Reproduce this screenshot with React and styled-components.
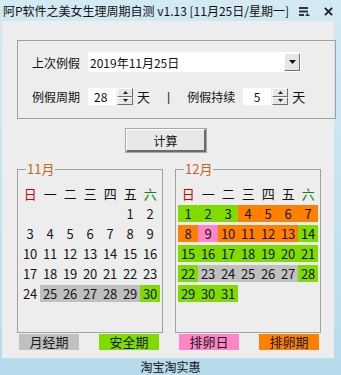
import React from "react";
import styled, { createGlobalStyle } from "styled-components";

const GlobalStyle = createGlobalStyle`
  html, body { margin: 0; padding: 0; }
  body {
    font-family: "Noto Sans CJK SC", "Noto Sans", sans-serif;
    color: #111;
  }
`;

const GRAY = "#c0c0c0";
const GREEN = "#80dc00";
const PINK = "#ff85c8";
const ORANGE = "#ff8000";

// month data: offset = weekday of day 1 (0 = sunday)
const november = {
  title: "11月",
  offset: 5,
  days: 30,
  colors: { 25: GRAY, 26: GRAY, 27: GRAY, 28: GRAY, 29: GRAY, 30: GREEN },
};

const decColors = {};
for (let d = 1; d <= 31; d++) {
  if (d <= 3) decColors[d] = GREEN;
  else if (d <= 8) decColors[d] = ORANGE;
  else if (d === 9) decColors[d] = PINK;
  else if (d <= 13) decColors[d] = ORANGE;
  else if (d <= 22) decColors[d] = GREEN;
  else if (d <= 27) decColors[d] = GRAY;
  else decColors[d] = GREEN;
}
const december = { title: "12月", offset: 0, days: 31, colors: decColors };

const weekdays = [
  { t: "日", c: "#d40000" },
  { t: "一", c: "#111" },
  { t: "二", c: "#111" },
  { t: "三", c: "#111" },
  { t: "四", c: "#111" },
  { t: "五", c: "#111" },
  { t: "六", c: "#108010" },
];

const legends = [
  { t: "月经期", c: GRAY },
  { t: "安全期", c: GREEN },
  { t: "排卵日", c: PINK },
  { t: "排卵期", c: ORANGE },
];

function Spinner() {
  return (
    <SpinBox>
      <SpinBtn>
        <svg width="5" height="3" viewBox="0 0 5 3">
          <path d="M2.5 0 L5 3 L0 3 Z" fill="#222" />
        </svg>
      </SpinBtn>
      <SpinBtn>
        <svg width="5" height="3" viewBox="0 0 5 3">
          <path d="M0 0 L5 0 L2.5 3 Z" fill="#222" />
        </svg>
      </SpinBtn>
    </SpinBox>
  );
}

function Month({ month }) {
  const cells = [];
  for (let i = 0; i < month.offset; i++) cells.push(<Cell key={"e" + i} />);
  for (let d = 1; d <= month.days; d++) {
    cells.push(
      <Cell key={d} $bg={month.colors[d]}>
        {d}
      </Cell>
    );
  }
  return (
    <CalGroup>
      <CalLegend>{month.title}</CalLegend>
      <CalGrid>
        {weekdays.map((w) => (
          <Cell key={w.t} $color={w.c}>
            {w.t}
          </Cell>
        ))}
        {cells}
      </CalGrid>
    </CalGroup>
  );
}

export default function App() {
  return (
    <>
      <GlobalStyle />
      <Window>
        <TitleBar>
          <TitleText>阿P软件之美女生理周期自测 v1.13 [11月25日/星期一]</TitleText>
          <TitleIcons>
            <svg width="11" height="9" viewBox="0 0 11 9">
              <rect x="0" y="0" width="9" height="2" fill="#333" />
              <rect x="0" y="3.5" width="9" height="2" fill="#333" />
              <rect x="0" y="7" width="5" height="2" fill="#333" />
              <path d="M6 9 L8.5 6 L11 9 Z" fill="#333" />
            </svg>
            <svg width="9" height="9" viewBox="0 0 10 10">
              <path d="M1 1 L9 9 M9 1 L1 9" stroke="#222" strokeWidth="2.2" />
            </svg>
          </TitleIcons>
        </TitleBar>

        <Body>
          <SettingsGroup>
            <Row>
              <Label>上次例假</Label>
              <DateBox>
                <span>2019年11月25日</span>
                <DropBtn>
                  <svg width="7" height="4" viewBox="0 0 7 4">
                    <path d="M0 0 L7 0 L3.5 4 Z" fill="#111" />
                  </svg>
                </DropBtn>
              </DateBox>
            </Row>
            <Row>
              <Label>例假周期</Label>
              <NumBox $w={28}>28</NumBox>
              <Spinner />
              <Unit>天</Unit>
              <Divider>|</Divider>
              <Label>例假持续</Label>
              <NumBox $w={28} $center>
                5
              </NumBox>
              <Spinner />
              <Unit>天</Unit>
            </Row>
          </SettingsGroup>

          <ButtonRow>
            <CalcButton>计算</CalcButton>
          </ButtonRow>

          <Calendars>
            <Month month={november} />
            <Month month={december} />
          </Calendars>

          <LegendRow>
            {legends.map((l) => (
              <Chip key={l.t} $bg={l.c}>
                {l.t}
              </Chip>
            ))}
          </LegendRow>
        </Body>

        <StatusBar>淘宝淘实惠</StatusBar>
      </Window>
    </>
  );
}

const Window = styled.div`
  width: 341px;
  height: 375px;
  display: flex;
  flex-direction: column;
  background: linear-gradient(180deg, #d3e9f3 0%, #c4e2ef 60%, #b6dbeb 100%);
  overflow: hidden;
`;

const TitleBar = styled.div`
  height: 21px;
  display: flex;
  align-items: center;
  padding: 0 8px 0 3px;
  font-size: 12px;
  flex-shrink: 0;
`;

const TitleText = styled.span`
  white-space: nowrap;
  color: #111;
  line-height: 21px;
`;

const TitleIcons = styled.div`
  flex-shrink: 0;
  margin-left: auto;
  display: flex;
  align-items: center;
  gap: 14px;
  padding-top: 1px;
`;

const Body = styled.div`
  height: 337px;
  margin: 0 7px 0 2px;
  background: #ededed;
  display: flex;
  flex-direction: column;
  flex-shrink: 0;
`;

const SettingsGroup = styled.div`
  width: 303px;
  margin: 19px 0 0 15px;
  border: 1px solid #a0a0a0;
  padding: 11px 0 12px 14px;
  display: flex;
  flex-direction: column;
  gap: 15px;
`;

const Row = styled.div`
  display: flex;
  align-items: center;
  font-size: 12px;
`;

const Label = styled.span`
  width: 48px;
  margin-right: 8px;
  white-space: nowrap;
  line-height: 17px;
`;

const DateBox = styled.div`
  width: 213px;
  height: 20px;
  background: #fff;
  display: flex;
  align-items: center;
  justify-content: space-between;
  padding: 0 1px 0 2px;
  box-sizing: border-box;
  font-size: 12px;
`;

const Raised = styled.div`
  box-sizing: border-box;
  background: #e6e6e6;
  border-top: 1px solid #fff;
  border-left: 1px solid #fff;
  border-right: 1px solid #6e6e6e;
  border-bottom: 1px solid #6e6e6e;
  display: flex;
  align-items: center;
  justify-content: center;
`;

const DropBtn = styled(Raised)`
  width: 16px;
  height: 18px;
`;

const NumBox = styled.div`
  width: ${(p) => p.$w}px;
  height: 17px;
  background: #fff;
  display: flex;
  align-items: center;
  justify-content: ${(p) => (p.$center ? "center" : "flex-start")};
  padding-left: ${(p) => (p.$center ? 0 : 6)}px;
  box-sizing: border-box;
  margin-right: 1px;
`;

const SpinBox = styled.div`
  width: 16px;
  height: 17px;
  display: flex;
  flex-direction: column;
`;

const SpinBtn = styled(Raised)`
  flex: 1;
  line-height: 0;
`;

const Unit = styled.span`
  margin-left: 4px;
  font-size: 13px;
`;

const Divider = styled.span`
  margin: 0 17px 0 17px;
  font-family: "Liberation Sans", sans-serif;
  font-size: 12px;
  color: #222;
`;

const ButtonRow = styled.div`
  display: flex;
  justify-content: center;
  margin-top: 10px;
  padding-right: 4px;
`;

const CalcButton = styled.button`
  width: 80px;
  height: 23px;
  padding: 0;
  font-family: inherit;
  font-size: 12px;
  color: #111;
  background: #e8e8e8;
  border-top: 1px solid #fff;
  border-left: 1px solid #fff;
  border-right: 2px solid #6a6a6a;
  border-bottom: 2px solid #6a6a6a;
  outline: 1px solid #a8a8a8;
`;

const Calendars = styled.div`
  display: flex;
  gap: 12px;
  margin: 9px 0 0 15px;
`;

const CalGroup = styled.fieldset`
  width: 146px;
  height: 172px;
  box-sizing: border-box;
  margin: 0;
  padding: 8px 0 0 2px;
  border: 1px solid #a0a0a0;
  min-width: 0;
`;

const CalLegend = styled.legend`
  padding: 0 1px;
  margin-left: 6px;
  font-size: 13px;
  line-height: 16px;
  color: #c4661c;
`;

const CalGrid = styled.div`
  display: grid;
  grid-template-columns: repeat(7, 20px);
  grid-auto-rows: 17px;
  row-gap: 3px;
`;

const Cell = styled.div`
  background: ${(p) => p.$bg || "transparent"};
  color: ${(p) => p.$color || "#151515"};
  font-size: 13px;
  line-height: 17px;
  text-align: center;
  letter-spacing: -0.3px;
`;

const LegendRow = styled.div`
  display: flex;
  justify-content: space-between;
  margin: 1px 15px 0 17px;
`;

const Chip = styled.div`
  width: 60px;
  height: 16px;
  background: ${(p) => p.$bg};
  font-size: 13px;
  line-height: 16px;
  text-align: center;
  color: #1a1a1a;
`;

const StatusBar = styled.div`
  flex: 1;
  display: flex;
  align-items: center;
  justify-content: center;
  font-size: 12px;
  color: #111;
`;
